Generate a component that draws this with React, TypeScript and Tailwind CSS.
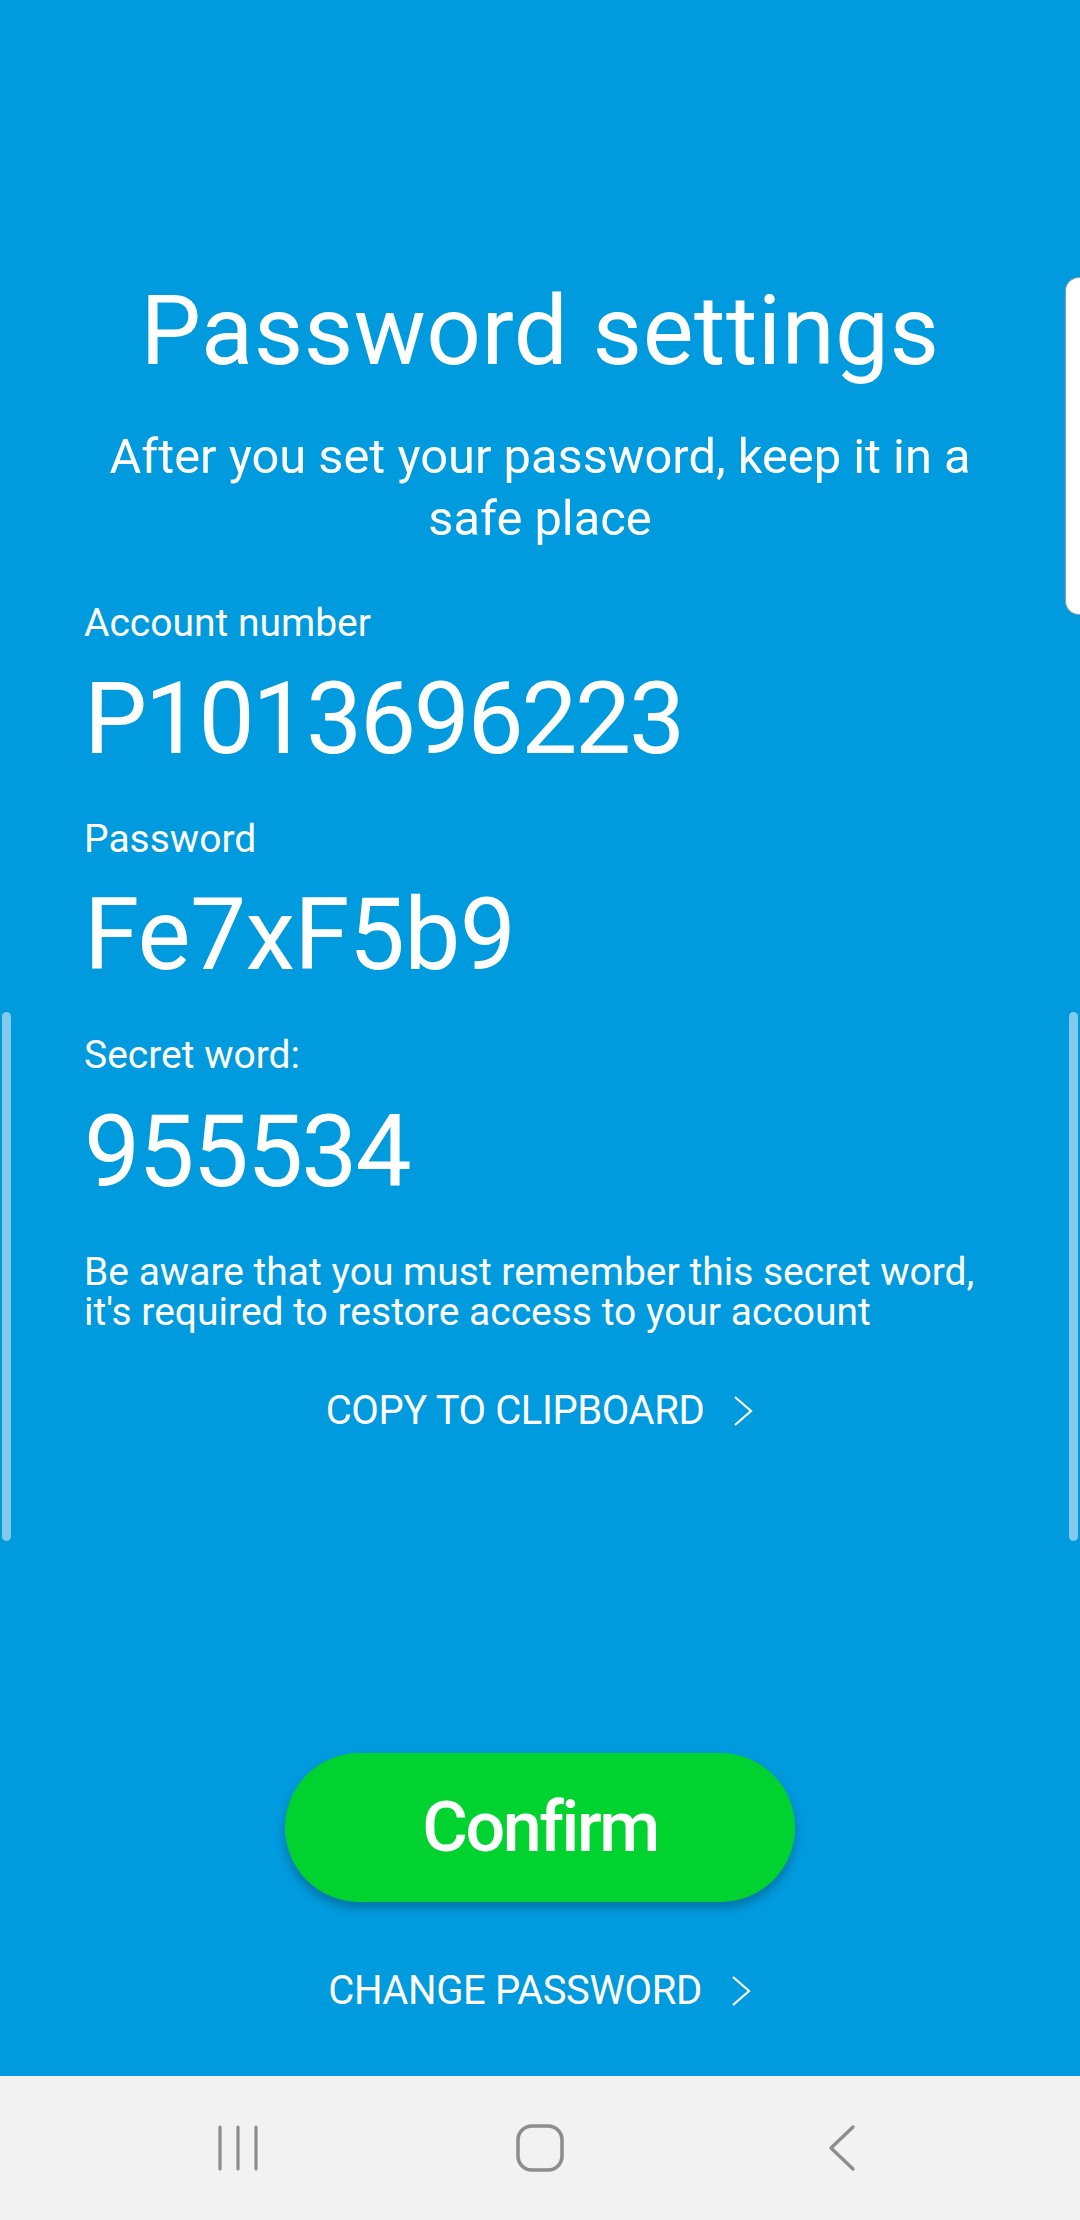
import React from 'react'

const font = { fontFamily: 'Roboto, "Noto Sans", sans-serif' }

function Chevron() {
  return (
    <svg width="22" height="32" viewBox="0 0 22 32" className="ml-[28px]">
      <polyline points="3,2 19,16 3,30" fill="none" stroke="white" strokeWidth="2.2" />
    </svg>
  )
}

function NavBar() {
  return (
    <div className="flex h-[144px] items-center justify-center bg-[#f2f2f2]">
      <div className="flex w-[302px] justify-center">
        <svg width="44" height="48" viewBox="0 0 44 48">
          <g stroke="#8e8e8e" strokeWidth="3.2" strokeLinecap="round">
            <line x1="4" y1="3" x2="4" y2="45" />
            <line x1="22" y1="3" x2="22" y2="45" />
            <line x1="40" y1="3" x2="40" y2="45" />
          </g>
        </svg>
      </div>
      <div className="flex w-[302px] justify-center">
        <svg width="50" height="50" viewBox="0 0 50 50">
          <rect x="3" y="3" width="44" height="44" rx="14" fill="none" stroke="#8e8e8e" strokeWidth="3.6" />
        </svg>
      </div>
      <div className="flex w-[302px] justify-center">
        <svg width="30" height="48" viewBox="0 0 30 48">
          <polyline points="26,3 4,24 26,45" fill="none" stroke="#8e8e8e" strokeWidth="3.4" strokeLinecap="round" strokeLinejoin="round" />
        </svg>
      </div>
    </div>
  )
}

export default function App() {
  return (
    <div className="relative h-[2220px] w-[1080px] overflow-hidden bg-[#009ade] text-white" style={font}>
      {/* edge panel handle */}
      <div className="absolute right-0 top-[277px] h-[338px] w-[15px] rounded-l-[14px] border border-r-0 border-[#8aa3b3] bg-white" />
      {/* scroll indicators */}
      <div className="absolute left-[2px] top-[1012px] h-[529px] w-[9px] rounded-full bg-[#80cbee]" />
      <div className="absolute right-[2px] top-[1012px] h-[529px] w-[9px] rounded-full bg-[#80cbee]" />

      <div className="flex h-[2076px] flex-col">
        <h1 className="mt-[283px] text-center text-[96px] leading-none tracking-[0.005em]">Password settings</h1>
        <p className="mx-auto mt-[47px] w-[900px] text-center text-[48.8px] leading-[62px]">
          After you set your password, keep it in a safe place
        </p>

        <div className="flex flex-col px-[84px]">
          <span className="mt-[54px] text-[39px] leading-none">Account number</span>
          <span className="mt-[26px] text-[100px] leading-none tracking-[-0.024em]">P1013696223</span>
          <span className="mt-[51px] text-[39px] leading-none">Password</span>
          <span className="mt-[26px] text-[100px] leading-none tracking-[-0.007em]">Fe7xF5b9</span>
          <span className="mt-[51px] text-[39px] leading-none">Secret word:</span>
          <span className="mt-[27px] text-[100px] leading-none tracking-[-0.019em]">955534</span>
          <p className="mt-[50px] text-[39px] leading-[40px]">
            Be aware that you must remember this secret word, it's required to restore access to your account
          </p>
        </div>

        <button className="mx-auto mt-[59px] flex items-center text-[40px] leading-none tracking-[-0.01em]">
          COPY TO CLIPBOARD
          <Chevron />
        </button>

        <button className="mx-auto mt-[322px] flex h-[149px] w-[510px] items-center justify-center rounded-full bg-[#00d32f] text-[70px] font-medium tracking-[-0.035em] shadow-[0_6px_10px_rgba(0,0,0,0.25)]">
          Confirm
        </button>

        <button className="mx-auto mt-[69px] flex items-center text-[40px] leading-none tracking-[-0.01em]">
          CHANGE PASSWORD
          <Chevron />
        </button>
      </div>

      <NavBar />
    </div>
  )
}
